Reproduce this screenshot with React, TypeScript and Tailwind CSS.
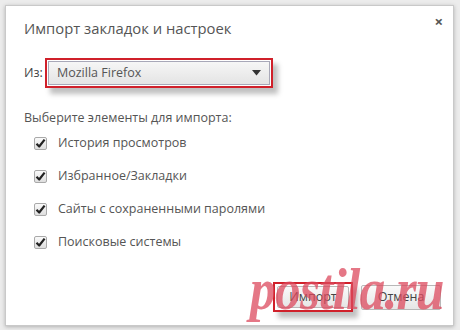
import React from "react";

const items = [
  "История просмотров",
  "Избранное/Закладки",
  "Сайты с сохраненными паролями",
  "Поисковые системы",
];

function Check() {
  return (
    <div className="w-[13px] h-[13px] border border-[#a9a9a9] rounded-[2px] bg-gradient-to-b from-[#fafafa] to-[#dedede] flex items-center justify-center">
      <svg width="11" height="11" viewBox="0 0 11 11">
        <path d="M1.5 5.8 L4.2 8.5 L9.6 1.6" fill="none" stroke="#222" strokeWidth="2.2" strokeLinejoin="round" />
      </svg>
    </div>
  );
}

export default function App() {
  return (
    <div
      className="w-[460px] h-[330px] bg-[#ececec] pl-[5px] pr-[6px] pt-[5px] pb-[4px] relative overflow-hidden"
      style={{ fontFamily: '"Open Sans", "Noto Sans", sans-serif' }}
    >
      <div className="relative h-full bg-white border border-[#c9c9c9] shadow-[0_1px_4px_rgba(0,0,0,0.25)] pl-[18px] pt-[12px] flex flex-col">
        <div className="absolute right-[10px] top-[8px] text-[#555] text-[15px] leading-none font-bold">×</div>
        <div className="text-[14.8px] leading-[20px] text-[#555]">Импорт закладок и настроек</div>
        <div className="flex items-center mt-[20px] h-[30px]">
          <span className="text-[12.5px] text-[#444] w-[21px]">Из:</span>
          <div className="border-2 border-[#d0202a] p-[1px] w-[228px] h-[30px] shadow-[5px_6px_5px_rgba(0,0,0,0.25)]">
            <div className="h-full border border-[#a8a8b8] bg-gradient-to-b from-[#f6f6f6] to-[#e4e4e4] flex items-center justify-between pl-[8px] pr-[8px]">
              <span className="text-[12.5px] text-[#555]">Mozilla Firefox</span>
              <svg width="9" height="6" viewBox="0 0 9 6">
                <path d="M0 0 H9 L4.5 5.5 Z" fill="#333" />
              </svg>
            </div>
          </div>
        </div>
        <div className="text-[12.5px] text-[#555] mt-[21px] leading-[18px]">Выберите элементы для импорта:</div>
        <div className="flex flex-col gap-[15px] mt-[7px] pl-[10px]">
          {items.map((t) => (
            <div key={t} className="flex items-center gap-[11px] h-[18px]">
              <Check />
              <span className="text-[12.5px] text-[#555]">{t}</span>
            </div>
          ))}
        </div>
        <div className="flex-1" />
        <div className="flex justify-end items-center gap-[8px] pr-[12px] pb-[13px]">
          <div className="border-2 border-[#d0202a] p-[2px] w-[80px] h-[30px] shadow-[5px_6px_5px_rgba(0,0,0,0.25)] bg-white">
            <div className="h-full border border-[#b8b8b8] rounded-[2px] bg-gradient-to-b from-[#fafafa] to-[#e6e6e6] flex items-center justify-center text-[12.5px] text-[#444]">
              Импорт
            </div>
          </div>
          <div className="w-[80px] h-[25px] border border-[#b8b8b8] rounded-[2px] bg-gradient-to-b from-[#fafafa] to-[#e6e6e6] flex items-center justify-center text-[12.5px] text-[#444]">
            Отмена
          </div>
        </div>
      </div>
      <div
        className="absolute left-[250px] top-[259px] text-[60px] leading-none font-bold italic text-[#dc4a5e]/75 pointer-events-none origin-left scale-x-[0.86] tracking-[-1px]"
        style={{ fontFamily: '"Liberation Serif", "DejaVu Serif", serif' }}
      >
        postila.ru
      </div>
    </div>
  );
}
